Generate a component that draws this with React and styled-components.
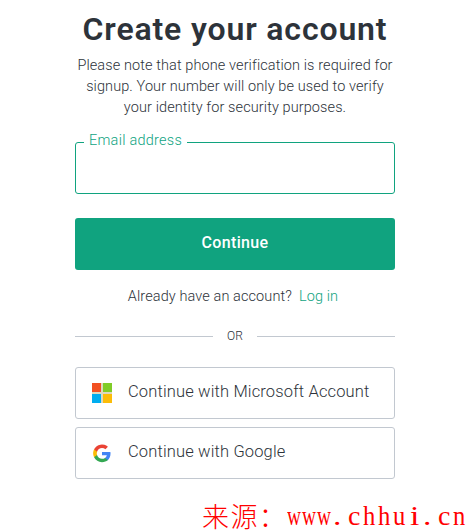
import React from "react";
import styled, { createGlobalStyle } from "styled-components";

const GlobalStyle = createGlobalStyle`
  * {
    box-sizing: border-box;
  }

  body {
    margin: 0;
    background: #fff;
    color: #2d333a;
    font-family: Roboto, "Liberation Sans", sans-serif;
  }
`;

const Page = styled.div`
  height: 530px;
  display: flex;
  flex-direction: column;
  align-items: center;
  padding-left: 2px;
`;

const Card = styled.main`
  width: 320px;
  display: flex;
  flex-direction: column;
`;

const Title = styled.h1`
  margin: 9px 0 6px;
  font-size: 32px;
  line-height: 40px;
  font-weight: 600;
  letter-spacing: 0.85px;
  text-align: center;
  white-space: nowrap;
`;

const Description = styled.p`
  margin: 0;
  font-size: 14.5px;
  line-height: 21px;
  font-weight: 350;
  letter-spacing: 0.1px;
  text-align: center;
  white-space: nowrap;
`;

const EmailField = styled.fieldset`
  width: 320px;
  height: 63px;
  margin: 13px 0 24px;
  padding: 0 8px;
  border: 1px solid #10a37f;
  border-radius: 3px;
`;

const EmailLabel = styled.legend`
  padding: 0 5px 2px 5px;
  color: #10a37f;
  font-size: 14.5px;
  line-height: 20px;
  font-weight: 350;
  letter-spacing: 0.25px;
`;

const EmailInput = styled.input`
  width: 100%;
  height: 34px;
  padding: 0 7px;
  border: 0;
  outline: none;
  background: transparent;
  font: inherit;
`;

const PrimaryButton = styled.button`
  height: 52px;
  padding: 0 0 3px;
  border: 0;
  border-radius: 3px;
  background: #10a37f;
  color: #fff;
  font-family: inherit;
  font-size: 16px;
  font-weight: 500;
  letter-spacing: 0.35px;
`;

const LoginRow = styled.p`
  margin: 16px 0 0;
  padding-right: 4px;
  display: flex;
  justify-content: center;
  gap: 7px;
  font-size: 14.5px;
  line-height: 21px;
  font-weight: 350;
  letter-spacing: 0.1px;
`;

const LoginLink = styled.a`
  color: #10a37f;
  text-decoration: none;
`;

const Divider = styled.div`
  margin: 19px 0 21px;
  display: flex;
  align-items: center;
  font-size: 12px;
  line-height: 20px;

  &::before,
  &::after {
    content: "";
    height: 1px;
    flex: 1;
    background: #c2c8d0;
  }
`;

const DividerText = styled.span`
  width: 44px;
  font-weight: 350;
  letter-spacing: 0.2px;
  text-align: center;
`;

const SocialButton = styled.button`
  height: 52px;
  margin-bottom: 8px;
  padding: 0 16px;
  display: flex;
  align-items: center;
  gap: 16px;
  border: 1px solid #c2c8d0;
  border-radius: 3px;
  background: #fff;
  color: #2d333a;
  font-family: inherit;
  font-size: 16.5px;
  font-weight: 350;
  letter-spacing: 0.15px;
  text-align: left;
`;

const SocialText = styled.span`
  padding-bottom: 3px;
`;

const IconBox = styled.svg`
  width: 20px;
  height: 20px;
  flex: none;
`;

const Source = styled.div`
  align-self: flex-end;
  height: 29px;
  margin-top: 14px;
  padding-right: 1px;
  display: flex;
  color: #f00;
  font-family: "Liberation Serif", serif;
  font-size: 28px;
  line-height: 29px;
  white-space: nowrap;
`;

const SourceLabel = styled.span`
  font-family: "Noto Sans CJK SC", sans-serif;
  font-size: 27px;
  font-weight: 300;
  letter-spacing: 1.3px;
`;

// Letters sit in 15px cells, so narrow and wide ones are evened out.
const Cells = styled.span`
  width: ${(props) => props.$count * 15}px;
  padding-left: ${(props) => props.$inset || 0}px;
`;

const Glyphs = styled.span`
  display: inline-block;
  letter-spacing: ${(props) => props.$spacing || 0}px;
  transform: scaleX(${(props) => props.$stretch || 1});
  transform-origin: left;
`;

const MicrosoftIcon = () => (
  <IconBox viewBox="0 0 20 20" shapeRendering="crispEdges">
    <path fill="#ddd8bd" d="M0 0h20v20H0z" />
    <path fill="#f25022" d="M0 0h9v9H0z" />
    <path fill="#80cc28" d="M11 0h9v9h-9z" />
    <path fill="#00adef" d="M0 11h9v9H0z" />
    <path fill="#fbbc09" d="M11 11h9v9h-9z" />
  </IconBox>
);

const GoogleIcon = () => (
  <IconBox viewBox="-1.5 -2 27 27">
    <path fill="#4285f4" d="M23.5 12.3c0-.9-.1-1.5-.2-2.2H12v4.5h6.5c-.3 1.5-1.1 2.8-2.5 3.7v3h3.9c2.3-2.1 3.6-5.2 3.6-9z" />
    <path fill="#34a853" d="M12 24c3.2 0 6-1.1 7.9-2.9l-3.9-3c-1 .7-2.4 1.2-4 1.2-3.1 0-5.8-2.1-6.7-5h-4v3.1C3.3 21.3 7.3 24 12 24z" />
    <path fill="#fbbc05" d="M5.3 14.3a7.2 7.2 0 0 1 0-4.6V6.6h-4a12 12 0 0 0 0 10.8z" />
    <path fill="#ea4335" d="M12 4.8c1.8 0 3.3.6 4.6 1.8L20 3.1A12 12 0 0 0 1.3 6.6l4 3.1c.9-2.8 3.6-4.9 6.7-4.9z" />
  </IconBox>
);

const App = () => {
  return (
    <Page>
      <GlobalStyle />
      <Card>
        <Title>Create your account</Title>
        <Description>
          Please note that phone verification is required for
          <br />
          signup. Your number will only be used to verify
          <br />
          your identity for security purposes.
        </Description>
        <EmailField>
          <EmailLabel>Email address</EmailLabel>
          <EmailInput type="email" aria-label="Email address" />
        </EmailField>
        <PrimaryButton>Continue</PrimaryButton>
        <LoginRow>
          <span>Already have an account?</span>
          <LoginLink href="#">Log in</LoginLink>
        </LoginRow>
        <Divider>
          <DividerText>OR</DividerText>
        </Divider>
        <SocialButton>
          <MicrosoftIcon />
          <SocialText>Continue with Microsoft Account</SocialText>
        </SocialButton>
        <SocialButton>
          <GoogleIcon />
          <SocialText>Continue with Google</SocialText>
        </SocialButton>
      </Card>
      <Source>
        <SourceLabel>来源：</SourceLabel>
        <Cells $count={3}>
          <Glyphs $stretch={0.69} $spacing={1.5}>www</Glyphs>
        </Cells>
        <Cells $count={1} $inset={1}>
          <Glyphs $stretch={1.2}>.</Glyphs>
        </Cells>
        <Cells $count={1} $inset={1}>
          <Glyphs>c</Glyphs>
        </Cells>
        <Cells $count={3} $inset={1}>
          <Glyphs $stretch={0.88} $spacing={3}>hhu</Glyphs>
        </Cells>
        <Cells $count={1} $inset={3}>
          <Glyphs $stretch={1.2}>i</Glyphs>
        </Cells>
        <Cells $count={1} $inset={1}>
          <Glyphs $stretch={1.2}>.</Glyphs>
        </Cells>
        <Cells $count={1} $inset={1}>
          <Glyphs>c</Glyphs>
        </Cells>
        <Cells $count={1} $inset={1}>
          <Glyphs $stretch={0.88}>n</Glyphs>
        </Cells>
      </Source>
    </Page>
  );
};

export default App;
